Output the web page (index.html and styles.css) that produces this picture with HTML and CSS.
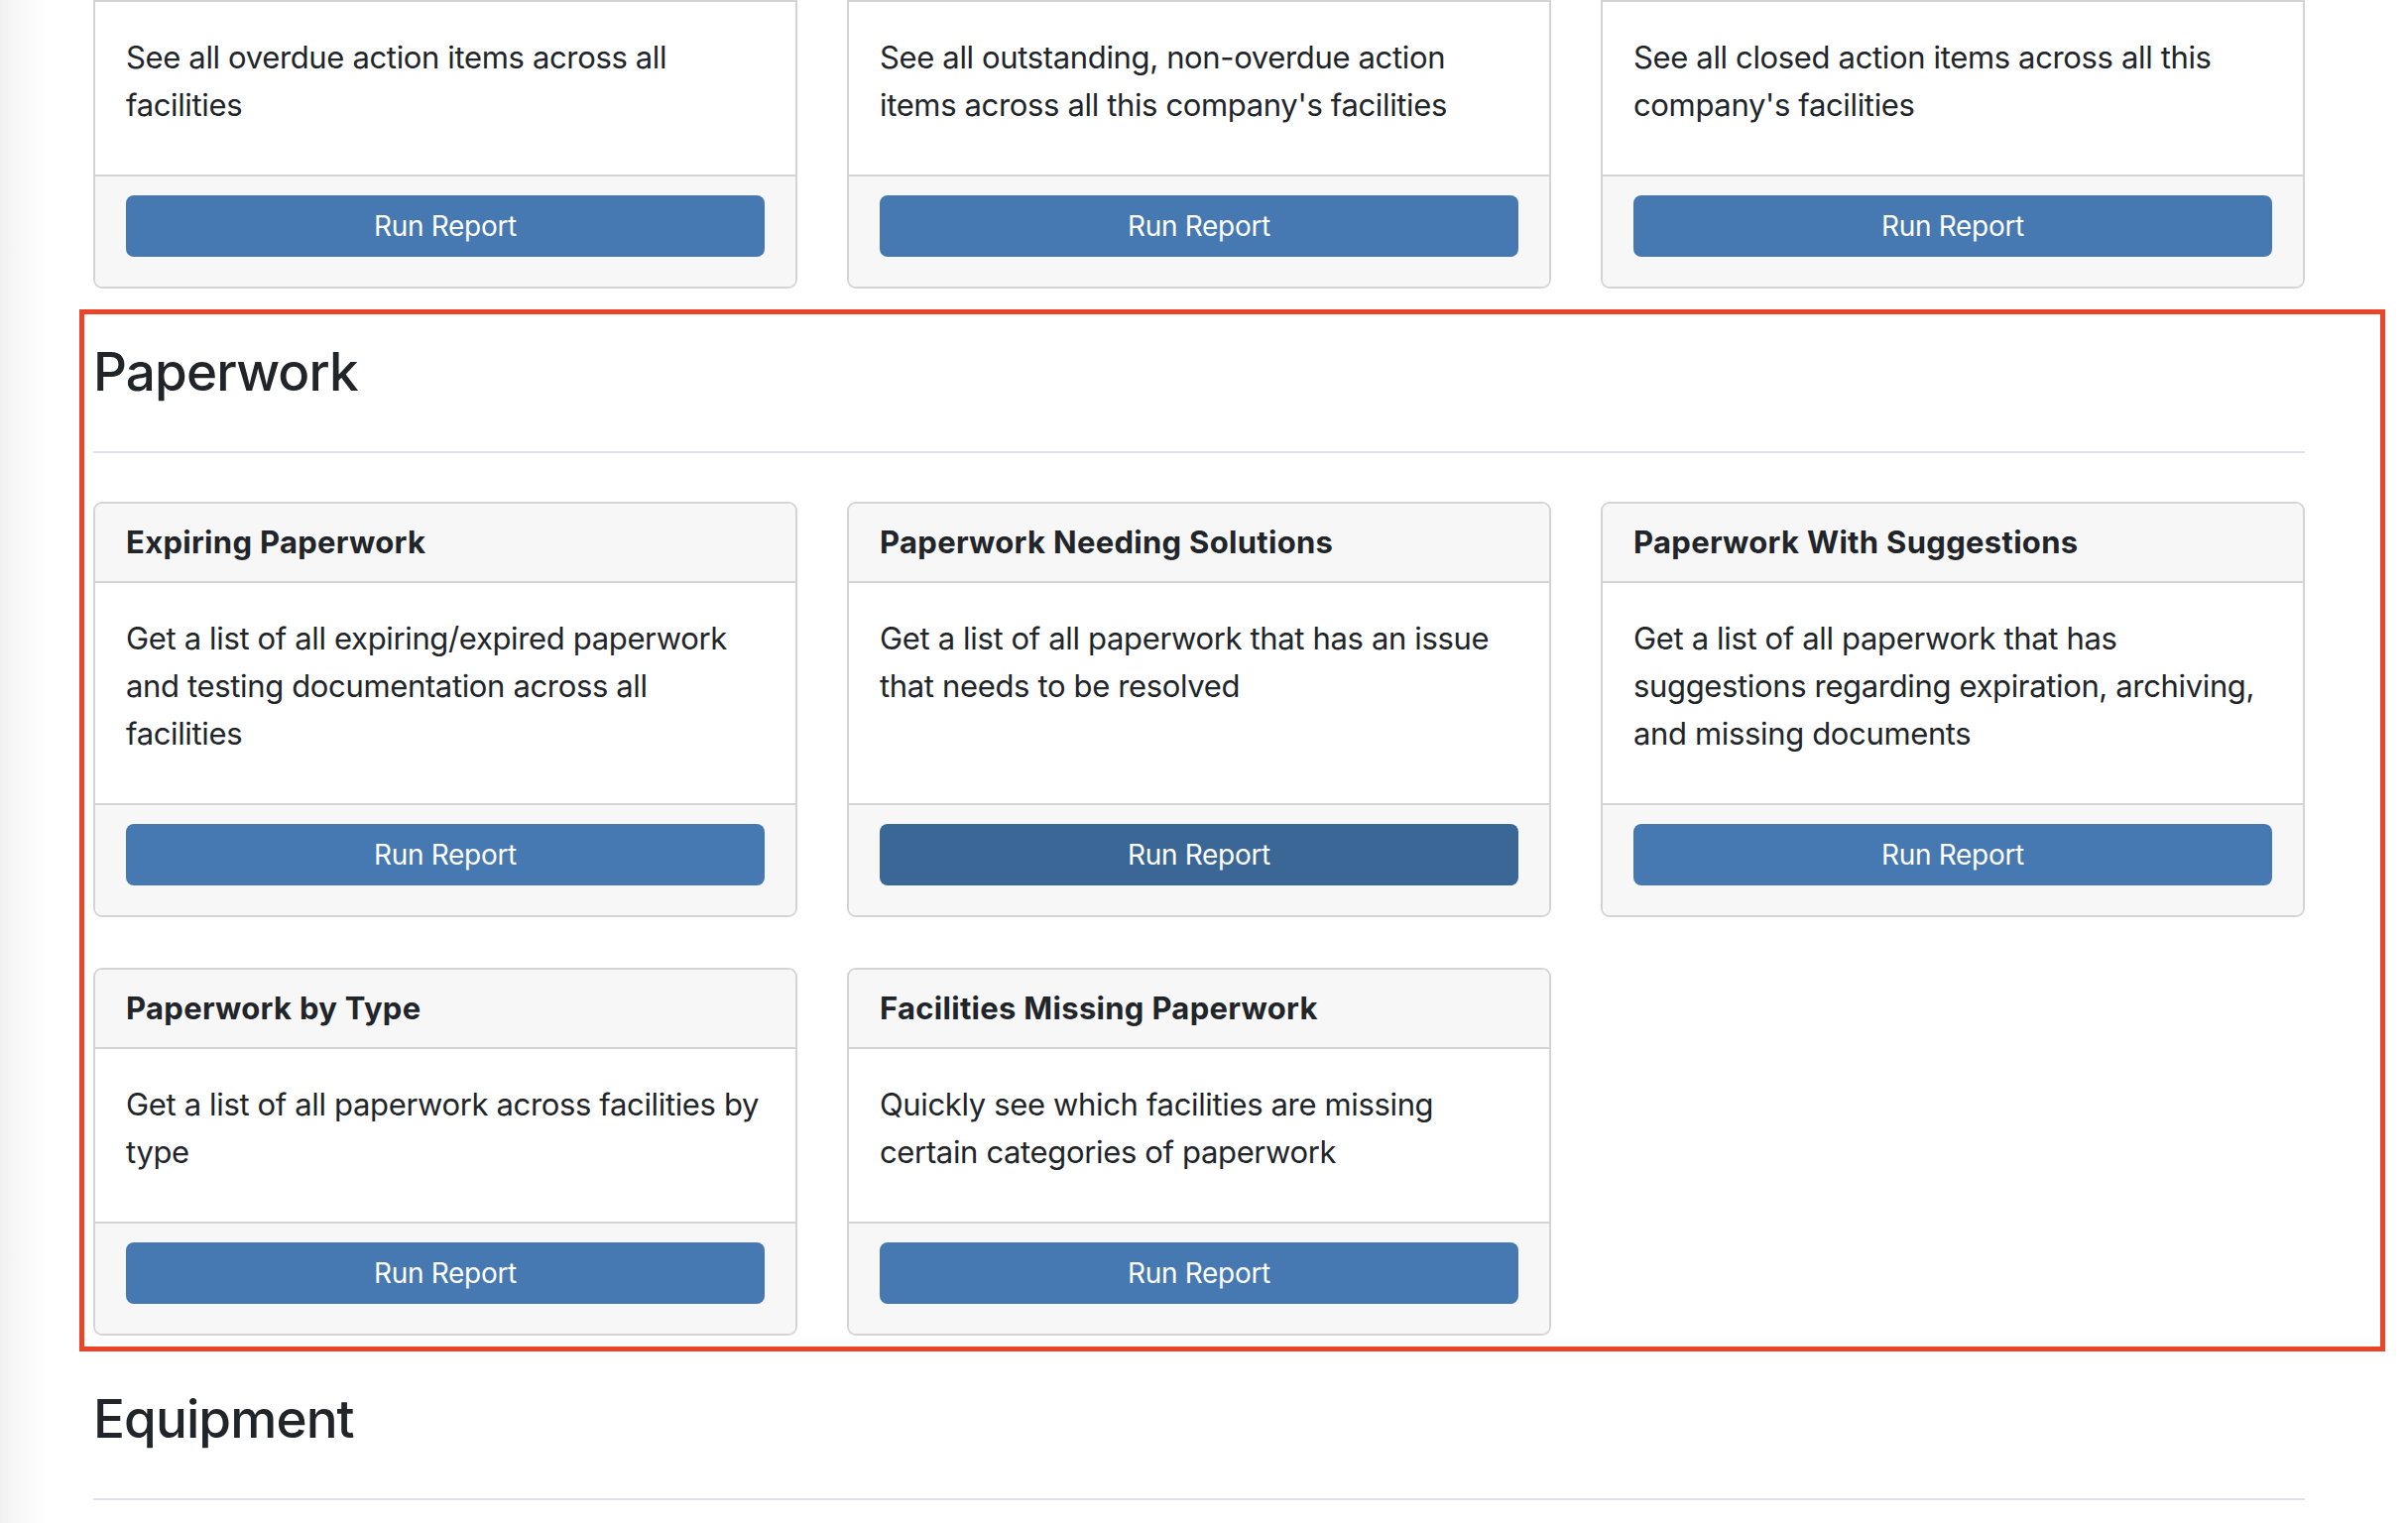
FILE: index.html
```html
<!DOCTYPE html>
<html lang="en">
<head>
<meta charset="utf-8">
<title>Reports</title>
<link rel="stylesheet" href="styles.css">
</head>
<body>
<div class="page">
  <div class="container">
    <div class="card-grid">
      <div class="card card-cut">
        <div class="card-body"><p>See all overdue action items across all facilities</p></div>
        <div class="card-footer"><button class="btn">Run Report</button></div>
      </div>
      <div class="card card-cut">
        <div class="card-body"><p>See all outstanding, non-overdue action items across all this company's facilities</p></div>
        <div class="card-footer"><button class="btn">Run Report</button></div>
      </div>
      <div class="card card-cut">
        <div class="card-body"><p>See all closed action items across all this company's facilities</p></div>
        <div class="card-footer"><button class="btn">Run Report</button></div>
      </div>
    </div>

    <section class="section">
      <h2 class="section-title">Paperwork</h2>
      <hr class="divider">
      <div class="card-grid">
        <div class="card">
          <div class="card-header">Expiring Paperwork</div>
          <div class="card-body"><p>Get a list of all expiring/expired paperwork and testing documentation across all facilities</p></div>
          <div class="card-footer"><button class="btn">Run Report</button></div>
        </div>
        <div class="card">
          <div class="card-header">Paperwork Needing Solutions</div>
          <div class="card-body"><p>Get a list of all paperwork that has an issue that needs to be resolved</p></div>
          <div class="card-footer"><button class="btn btn-hover">Run Report</button></div>
        </div>
        <div class="card">
          <div class="card-header">Paperwork With Suggestions</div>
          <div class="card-body"><p>Get a list of all paperwork that has suggestions regarding expiration, archiving, and missing documents</p></div>
          <div class="card-footer"><button class="btn">Run Report</button></div>
        </div>
        <div class="card">
          <div class="card-header">Paperwork by Type</div>
          <div class="card-body"><p>Get a list of all paperwork across facilities by type</p></div>
          <div class="card-footer"><button class="btn">Run Report</button></div>
        </div>
        <div class="card">
          <div class="card-header">Facilities Missing Paperwork</div>
          <div class="card-body"><p>Quickly see which facilities are missing certain categories of paperwork</p></div>
          <div class="card-footer"><button class="btn">Run Report</button></div>
        </div>
      </div>
    </section>

    <section class="section">
      <h2 class="section-title">Equipment</h2>
      <hr class="divider">
    </section>
  </div>
  <div class="highlight"></div>
</div>
</body>
</html>
```

FILE: styles.css
```css
* { box-sizing: border-box; }

html, body {
  margin: 0;
  padding: 0;
}

body {
  width: 2428px;
  height: 1536px;
  overflow: hidden;
  background: linear-gradient(to right, #f1f1f1 0, #f8f8f8 20px, #ffffff 48px);
  font-family: Inter, "Noto Sans", "Liberation Sans", sans-serif;
  color: #212529;
}

.page {
  position: relative;
  width: 2428px;
  height: 1536px;
}

.container {
  width: 2230px;
  margin-left: 94px;
}

.card-grid {
  display: grid;
  grid-template-columns: repeat(3, 710px);
  column-gap: 50px;
  row-gap: 51px;
}

.card {
  display: flex;
  flex-direction: column;
  border: 2px solid #d4d4d4;
  border-radius: 9px;
  background: #ffffff;
  overflow: hidden;
}

.card-cut {
  border-top-left-radius: 0;
  border-top-right-radius: 0;
}

.card-header {
  background: #f7f7f7;
  border-bottom: 2px solid #d4d4d4;
  padding: 15px 31px;
  font-size: 31px;
  line-height: 48px;
  font-weight: 700;
  letter-spacing: 0.3px;
  color: #212529;
}

.card-body {
  flex: 1;
  padding: 32px 30px 30px 31px;
}

.card-body p {
  margin: 0 0 16px;
  font-size: 31px;
  line-height: 48px;
  letter-spacing: -0.35px;
}

.card-footer {
  background: #f7f7f7;
  border-top: 2px solid #d4d4d4;
  padding: 19px 31px 30px;
}

.btn {
  display: block;
  width: 100%;
  height: 62px;
  border: none;
  border-radius: 8px;
  background: #4679b2;
  color: #ffffff;
  font-family: Inter, "Noto Sans", "Liberation Sans", sans-serif;
  font-size: 28px;
  letter-spacing: -0.3px;
  cursor: pointer;
}

.btn-hover {
  background: #3b6797;
}

.section {
  padding-top: 51px;
}

.section-title {
  margin: 0;
  font-size: 53px;
  line-height: 67px;
  font-weight: 500;
  letter-spacing: -0.9px;
  color: #212529;
}

.divider {
  margin: 46px 0 49px;
  border: 0;
  border-top: 2px solid #e1e4e7;
  height: 0;
}

.highlight {
  position: absolute;
  left: 80px;
  top: 312px;
  width: 2325px;
  height: 1051px;
  border: 5px solid #ea4429;
  pointer-events: none;
}
```
